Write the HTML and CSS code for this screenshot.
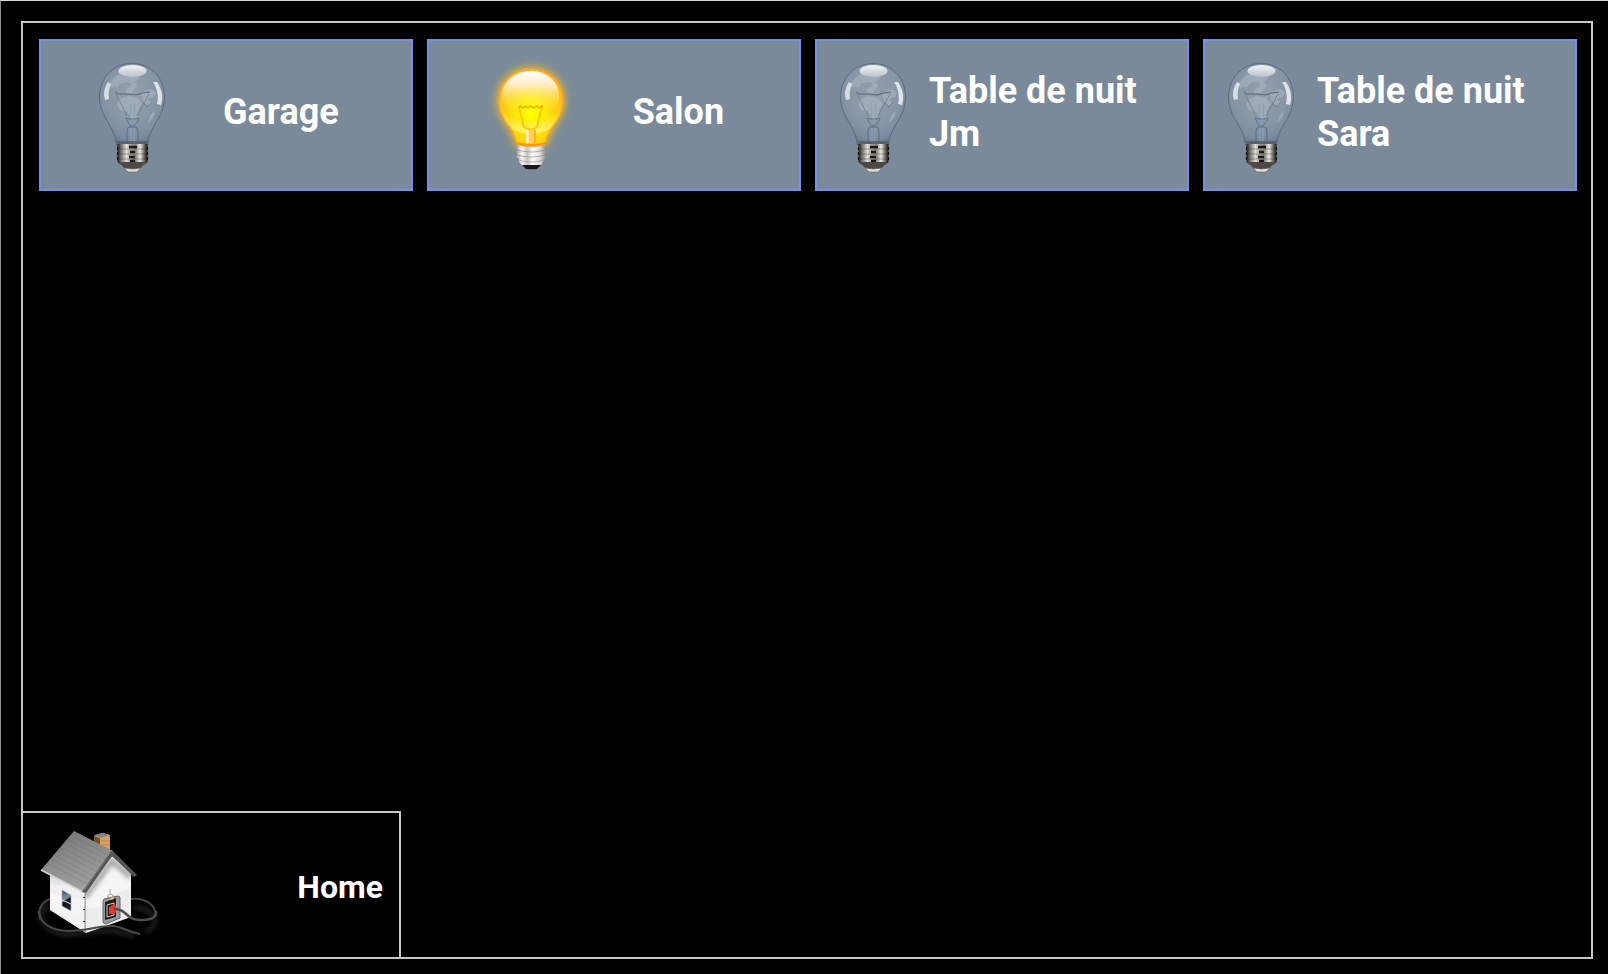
FILE: index.html
```
<!DOCTYPE html>
<html lang="fr">
<head>
    <meta charset="UTF-8">
    <meta name="viewport" content="width=device-width, initial-scale=1.0">
    <title>Home</title>
    <link rel="stylesheet" href="styles.css">
</head>
<body>
    <svg class="defs" aria-hidden="true">
        <defs>
            <radialGradient id="glass" cx="50%" cy="38%" r="62%">
                <stop offset="0" stop-color="#a3afbc" stop-opacity="0.6"/>
                <stop offset="0.6" stop-color="#93a1b1" stop-opacity="0.5"/>
                <stop offset="0.88" stop-color="#7b8aa0" stop-opacity="0.7"/>
                <stop offset="1" stop-color="#63748b" stop-opacity="0.8"/>
            </radialGradient>
            <linearGradient id="shine" x1="0" y1="0" x2="0" y2="1">
                <stop offset="0" stop-color="#f4f6f8"/>
                <stop offset="1" stop-color="#b9c1ca"/>
            </linearGradient>
            <linearGradient id="metal">
                <stop offset="0" stop-color="#1c1a18"/>
                <stop offset="0.12" stop-color="#77726c"/>
                <stop offset="0.3" stop-color="#e2dfdc"/>
                <stop offset="0.42" stop-color="#a9a49e"/>
                <stop offset="0.6" stop-color="#8b8580"/>
                <stop offset="0.75" stop-color="#eeeae6"/>
                <stop offset="0.9" stop-color="#66605a"/>
                <stop offset="1" stop-color="#141210"/>
            </linearGradient>
            <symbol id="bulb-off" viewBox="0 0 112 120">
                <path d="M56 5.500C37 5.500 23.500 20 23.500 39c0 17 10 25 14 36 2 5 2.500 9 3 12h31c.5-3 1-7 3-12 4-11 14-19 14-36C88.500 20 75 5.500 56 5.500z" fill="url(#glass)" stroke="#4d5d74" stroke-opacity="0.75" stroke-width="1"/>
                <g fill="#b4bec9" opacity="0.45">
                    <path d="M33 26l5-6 5-4 9 3 12-1-2 4-6 3-5-1-6 1-4 5-3-2-2 3z"/>
                    <path d="M50 31l4-2 2-5 4 1 1 4-3 2-2 4-6 0z"/>
                    <path d="M43 41l9-3 9 2 5 6-3 4-2 9-5 4-4-9-8-2-3-5z"/>
                    <path d="M65 35l10-4 5 3-2 5-6 2 4 4-4 3-5-5z"/>
                    <path d="M74 58l4-5 1 3-3 5-4 4z"/>
                </g>
                <g fill="none" stroke="#64707c" stroke-width="0.800">
                    <path d="M39 34l3 2 10 0 8 1 7-2 7-1" stroke="#4f565e"/>
                    <path d="M40 36l11 22M73 36l-12 22M67 44l4 5 5-5" opacity="0.8"/>
                    <path d="M50 60l3 1h7l3-1-1 3-4 5h-4z" stroke="#4e6b8c"/>
                    <path d="M51 87v-14q0-4 3-4h5q3 0 3 4v14" stroke="#496789"/>
                </g>
                <path d="M54.500 45v15M58.500 45v15M55 70v17M58 70v17" stroke="#8aa5ae" stroke-width="1"/>
                <ellipse cx="56.500" cy="13" rx="14" ry="6" fill="url(#shine)"/>
                <path d="M32 24c-4 6-5 12-3 18l4-1c-1-6 0-10 2-15z" fill="#e5e9ec" opacity="0.85"/>
                <path d="M77 24c4 6 6 14 4 22l4 1c3-9 0-17-4-23z" fill="#e9ecef" opacity="0.9"/>
                <path d="M41 83h31l-1 4H42z" fill="#535c67" opacity="0.8"/>
                <path d="M41.500 86h30v18l-5 5h-20l-5-5z" fill="url(#metal)"/>
                <path d="M42 91h29M42 96h29M42 101h29" stroke="#312d2a" stroke-width="0.800" opacity="0.45"/>
                <path d="M41.500 89v3M41.500 94v3M41.500 99v3M71.500 89v3M71.500 94v3M71.500 99v3" stroke="#0b0a0a" stroke-width="1.200"/>
                <path d="M53 89h8M54 94h5M53 99h6M54 103h5" stroke="#1b1917" stroke-width="2.400"/>
                <path d="M43 104h27l-5 6q-8 3-17 0z" fill="#4b4845"/>
                <path d="M48 110q8.500 2 17 0l-4 4h-9z" fill="#e0dfdd" stroke="#6a6866" stroke-width="0.700"/>
            </symbol>

            <filter id="glow" x="-30%" y="-30%" width="160%" height="160%">
                <feGaussianBlur stdDeviation="4.5"/>
            </filter>
            <radialGradient id="lit" cx="50%" cy="58%" r="60%">
                <stop offset="0" stop-color="#ffff00"/>
                <stop offset="0.3" stop-color="#fff000"/>
                <stop offset="0.7" stop-color="#ffcb15"/>
                <stop offset="1" stop-color="#ffad2c"/>
            </radialGradient>
            <linearGradient id="lit-shine" x1="0" y1="0" x2="0" y2="1">
                <stop offset="0" stop-color="#ffffff"/>
                <stop offset="0.3" stop-color="#fff2dd" stop-opacity="0.9"/>
                <stop offset="0.75" stop-color="#ffee60" stop-opacity="0.25"/>
                <stop offset="1" stop-color="#ffff00" stop-opacity="0"/>
            </linearGradient>
            <linearGradient id="lit-low" x1="0" y1="0" x2="0" y2="1">
                <stop offset="0" stop-color="#ffe000" stop-opacity="0.1"/>
                <stop offset="1" stop-color="#fff79c" stop-opacity="0.8"/>
            </linearGradient>
            <linearGradient id="silver">
                <stop offset="0" stop-color="#9b9690"/>
                <stop offset="0.2" stop-color="#f7f6f4"/>
                <stop offset="0.38" stop-color="#c9c5c0"/>
                <stop offset="0.55" stop-color="#ffffff"/>
                <stop offset="0.8" stop-color="#dedcd9"/>
                <stop offset="1" stop-color="#8d8984"/>
            </linearGradient>
            <symbol id="bulb-on" viewBox="0 0 112 120">
                <path d="M56 11C38 11 24 25 24 43c0 16 12 24 16 36 1 3 1 6 2 7h28c1-1 1-4 2-7 4-12 16-20 16-36 0-18-14-32-32-32z" fill="#ffc21e" stroke="#ffc21e" stroke-width="4" filter="url(#glow)" opacity="0.9"/>
                <path d="M56 11C38 11 24 25 24 43c0 16 12 24 16 36 1 3 1 6 2 7 8 3 20 3 28 0 1-1 1-4 2-7 4-12 16-20 16-36 0-18-14-32-32-32z" fill="url(#lit)" stroke="#ffa62a" stroke-width="1.200"/>
                <path d="M26 50c4 10 15 13 30 13s26-3 30-13c-1 11-9 19-13 22-8 4-26 4-34 0-4-3-12-11-13-22z" fill="url(#lit-low)"/>
                <path d="M56 13c-16 0-29 11-29 25 0 12 12 19 29 19s28-7 28-19c0-14-12-25-28-25z" fill="url(#lit-shine)"/>
                <path d="M44 49l5 20q8 5 13 0l5-20" fill="none" stroke="#f4b800" stroke-width="2" opacity="0.7"/>
                <path d="M43 49l3-1 2 2 3-2 2 2 3-2 3 2 3-2 2 2 3-2 1 1" fill="none" stroke="#e0a800" stroke-width="1.200"/>
                <path d="M51 72h10v13H51z" fill="#ffcf50"/>
                <path d="M52.500 72v13" stroke="#ffffff" stroke-width="2"/>
                <path d="M60 72v13" stroke="#f39b12" stroke-width="1.500" opacity="0.7"/>
                <path d="M41 85q15 4 30 0" fill="none" stroke="#ff960a" stroke-width="2"/>
                <path d="M42 87q14 4 28 0l1 3-1 2 1 3-1 2 1 3-2 2-2 4-3 2H48l-4-4v-3l-3-2 1-3-1-2 1-3-1-2z" fill="url(#silver)"/>
                <path d="M42 92q14 4 28 0M42 97q14 4 28 0M43 102q13 4 26 0" fill="none" stroke="#8e8984" stroke-width="1.200" opacity="0.6"/>
                <path d="M47 107h19l-4 4q-6 1-11 0z" fill="#171717"/>
                <path d="M52 112h9" stroke="#8c8c8c" stroke-width="1"/>
            </symbol>

            <linearGradient id="roof" x1="0" y1="0" x2="0.4" y2="1">
                <stop offset="0" stop-color="#747474"/>
                <stop offset="1" stop-color="#a0a0a0"/>
            </linearGradient>
            <linearGradient id="wall" x1="0" y1="0" x2="0" y2="1">
                <stop offset="0" stop-color="#c9c9c9"/>
                <stop offset="0.3" stop-color="#f2f2f2"/>
                <stop offset="1" stop-color="#dedede"/>
            </linearGradient>
            <linearGradient id="pane" x1="0" y1="0" x2="0.3" y2="1">
                <stop offset="0" stop-color="#34465a"/>
                <stop offset="0.5" stop-color="#8194a8"/>
                <stop offset="0.6" stop-color="#10151b"/>
                <stop offset="1" stop-color="#1a222b"/>
            </linearGradient>
            <filter id="soft" x="-20%" y="-20%" width="140%" height="160%">
                <feGaussianBlur stdDeviation="2"/>
            </filter>
            <clipPath id="front-clip">
                <path d="M46 71L73 37 92 53v45l-45 16z"/>
            </clipPath>
        </defs>
    </svg>

    <main class="frame">
        <div class="lights">
            <button type="button" class="light">
                <span class="light-inner">
                    <span class="light-icon"><svg class="bulb" aria-hidden="true"><use href="#bulb-off"/></svg></span>
                    <span class="light-name">Garage</span>
                </span>
            </button>
            <button type="button" class="light">
                <span class="light-inner">
                    <span class="light-icon"><svg class="bulb" aria-hidden="true"><use href="#bulb-on"/></svg></span>
                    <span class="light-name">Salon</span>
                </span>
            </button>
            <button type="button" class="light">
                <span class="light-inner">
                    <span class="light-icon"><svg class="bulb" aria-hidden="true"><use href="#bulb-off"/></svg></span>
                    <span class="light-name">Table de nuit Jm</span>
                </span>
            </button>
            <button type="button" class="light">
                <span class="light-inner">
                    <span class="light-icon"><svg class="bulb" aria-hidden="true"><use href="#bulb-off"/></svg></span>
                    <span class="light-name">Table de nuit Sara</span>
                </span>
            </button>
        </div>
        <a class="home" href="#">
            <svg class="house" viewBox="0 10 120 112" aria-hidden="true">
                <!-- shadow of the cable -->
                <path d="M10 84C-4 96 2 112 26 115c20 1 35-6 50-3l20 5M95 89c20-2 29 20 11 23" fill="none" stroke="#3a3a3a" stroke-width="5" opacity="0.5" filter="url(#soft)"/>
                <!-- cable behind the walls -->
                <path d="M11 80C3 83-1 90 1 100M92 80c14-2 25 6 25 17" fill="none" stroke="#444" stroke-width="2"/>
                <!-- chimney -->
                <path d="M55 17l9-3 7 2v20H55z" fill="#d9a061"/>
                <path d="M55 17l6 2v12l-6-4z" fill="#73502b"/>
                <path d="M55 16l8-2 8 2-9 3z" fill="#83868c"/>
                <path d="M62 22h9M62 26h9M62 30h9" stroke="#b98144" stroke-width="0.800"/>
                <!-- walls -->
                <path d="M11 50l36 19v45L11 91z" fill="url(#wall)"/>
                <path d="M46 71L73 37l19 16v45l-45 16z" fill="#f5f5f5"/>
                <path d="M46 78L73 42l19 16" fill="none" stroke="#777" stroke-width="6" opacity="0.6" filter="url(#soft)" clip-path="url(#front-clip)"/>
                <path d="M11 73q18 9 35 5v35L11 91z" fill="#fff" opacity="0.5"/>
                <path d="M50 88q9 4 17-5 12-12 25-13v27l-45 16V90z" fill="#dfdfdf" opacity="0.35"/>
                <path d="M46 72v42" stroke="#6a6a6a" stroke-width="0.800"/>
                <path d="M45 78v1M45 90v1M45 102v1" stroke="#222" stroke-width="2"/>
                <!-- roof -->
                <path d="M35 12L2 51l44 23 28-42z" fill="url(#roof)"/>
                <path d="M32 16l39 21M28 20l40 21M25 24l40 21M22 28l40 21M19 32l39 21M15 36l40 21M12 40l40 21M8 44l40 21" stroke="#676767" stroke-width="0.700" opacity="0.4"/>
                <path d="M2 51l44 23" stroke="#d2d2d2" stroke-width="1.600"/>
                <path d="M73 31l25 25-3 2-22-21-26 37-4-1z" fill="#555"/>
                <path d="M73 31L45 72" stroke="#777" stroke-width="1"/>
                <!-- window -->
                <path d="M23 71l9 5v16l-9-5z" fill="url(#pane)" stroke="#b5b5b5" stroke-width="0.700"/>
                <path d="M23 81l9 4" stroke="#e8e8e8" stroke-width="1"/>
                <!-- network mark -->
                <path d="M71 72v3M69 78v-2l2-1 3 1v1" fill="none" stroke="#aaa" stroke-width="1"/>
                <circle cx="71" cy="71" r="1" fill="#bbb"/>
                <circle cx="69" cy="78" r="1" fill="#bbb"/>
                <circle cx="74" cy="77" r="1" fill="#bbb"/>
                <!-- socket and plug -->
                <path d="M65 80l14-3q2 0 2 2v20l-14 6q-3 0-3-3V82z" fill="#9a9a9a" stroke="#666" stroke-width="1"/>
                <path d="M66 83l11-4v19l-11 3z" fill="#1c1c1c"/>
                <path d="M68 86l7-2v12l-7 2z" fill="none" stroke="#ccc" stroke-width="1"/>
                <path d="M71 79l4-1v2l-4 1z" fill="#e3b86e"/>
                <path d="M70 88l2-1 3-2 2 1v7l-3 2-4 0z" fill="#e9362d"/>
                <!-- cable in front -->
                <path d="M75 90c14 0 10 10 26 11 11 0 17-2 16-9" fill="none" stroke="#4c4c4c" stroke-width="2.500"/>
                <path d="M0 92c0 12 13 20 30 20 18 0 28-5 43-5 10 0 15 6 28 8" fill="none" stroke="#494949" stroke-width="2"/>
            </svg>
            <span class="home-name">Home</span>
        </a>
    </main>
</body>
</html>
```

FILE: styles.css
```
* {
    box-sizing: border-box;
}
body {
    margin: 0;
    min-height: 100vh;
    display: flex;
    padding: 20px 15px 15px 20px;
    border-top: 1px solid #d6d9d8;
    border-left: 1px solid #8c8c8c;
    background-color: #000;
    color: #fff;
    font-family: Roboto, sans-serif;
    font-weight: bold;
}
.defs {
    position: absolute;
    width: 0;
    height: 0;
}
.frame {
    flex: 1;
    display: flex;
    flex-direction: column;
    justify-content: space-between;
    border: 2px solid #c8c8c8;
}
.lights {
    display: grid;
    grid-template-columns: repeat(4, 1fr);
    gap: 14px;
    padding: 16px 14px 16px 16px;
}
.light {
    height: 152px;
    padding: 0;
    border: 2px solid #7393e0;
    background-color: #7b8a9a;
    color: #fff;
    font: inherit;
    font-size: 36px;
    line-height: 43px;
    text-align: left;
    cursor: pointer;
}
.light-inner {
    display: table;
    width: 100%;
}
.light-icon, .light-name {
    display: table-cell;
    vertical-align: middle;
}
.light-icon {
    padding-top: 6px;
}
.light-name {
    padding-bottom: 5px;
}
.bulb {
    display: block;
    width: 112px;
    height: 120px;
    margin: 0 auto;
}
.home {
    display: flex;
    justify-content: space-between;
    align-items: center;
    width: 378px;
    padding: 16px;
    border-top: 2px solid #c8c8c8;
    border-right: 2px solid #c8c8c8;
    color: #fff;
    font-size: 32px;
    text-decoration: none;
}
.home-name {
    padding-top: 3px;
}
.house {
    width: 120px;
    height: 112px;
    overflow: visible;
}
```
